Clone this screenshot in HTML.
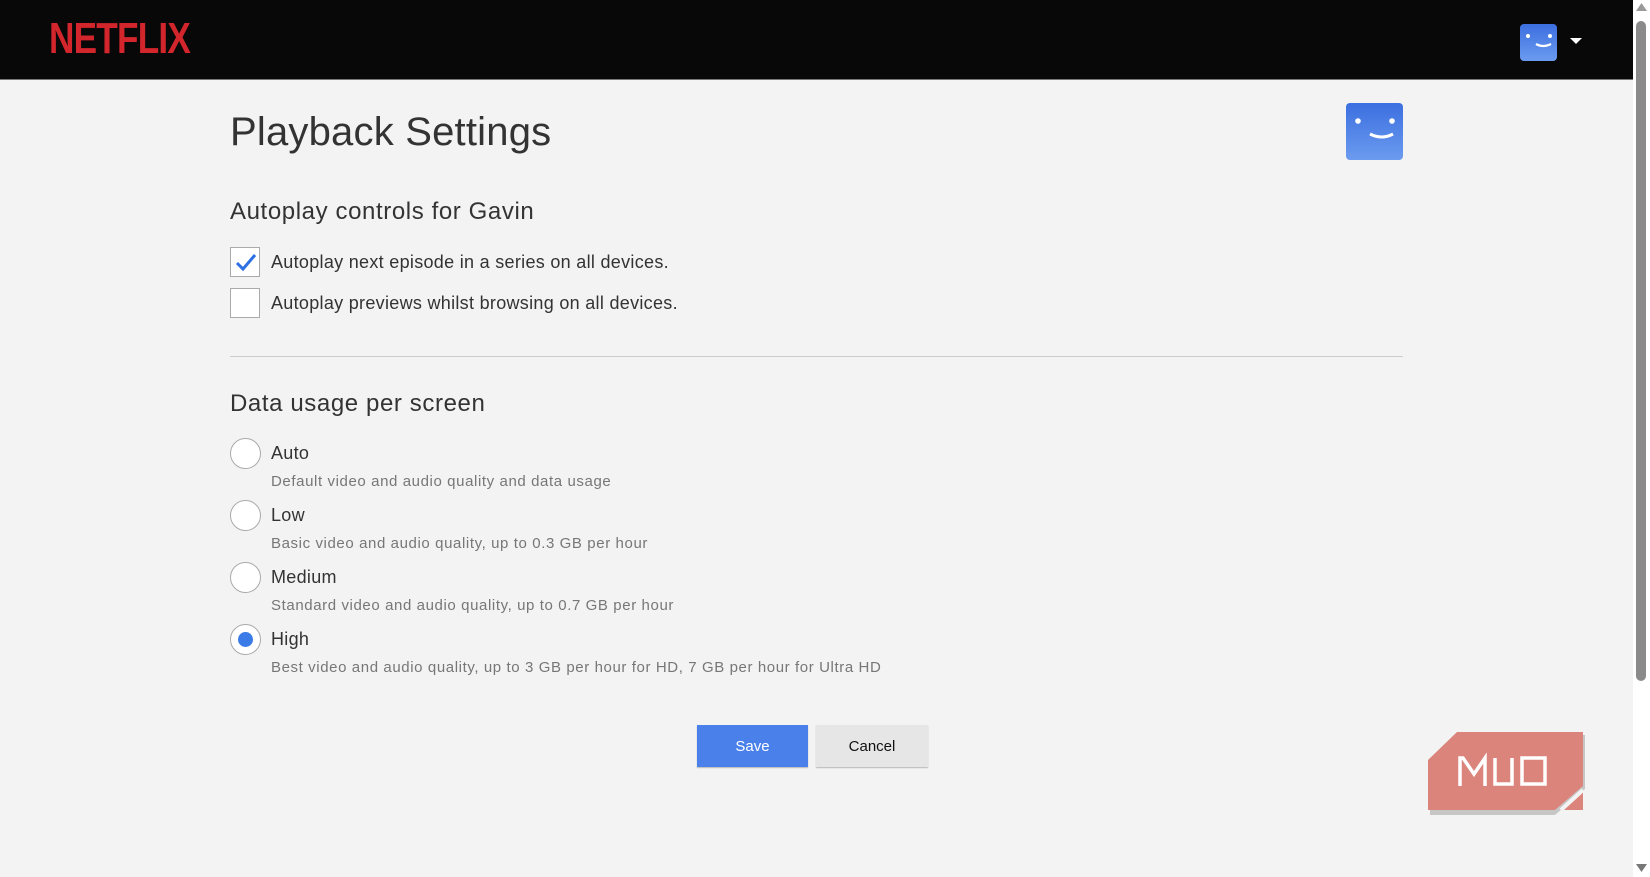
<!DOCTYPE html>
<html><head><meta charset="utf-8"><style>
*{margin:0;padding:0;box-sizing:border-box}
body{width:1650px;height:877px;background:#f3f3f3;font-family:"Liberation Sans",Arial,sans-serif;position:relative;overflow:hidden;color:#333}
.hdr{position:absolute;left:0;top:0;width:1633px;height:80px;background:#080808;border-bottom:1px solid #777}
.sb{position:absolute;right:0;top:0;width:17px;height:877px;background:#fff}
.thumb{position:absolute;left:3px;top:21px;width:10px;height:660px;background:#8a8a8a;border-radius:5px}
.a{position:absolute}
.av{background:linear-gradient(#3c6fe0,#6b9bef);border-radius:4px}
.t{position:absolute;white-space:nowrap}
.cb{position:absolute;width:30px;height:30px;border:1px solid #aaa;background:#fff}
.rd{position:absolute;width:31px;height:31px;border:1px solid #aaa;border-radius:50%;background:#fff}
.btn{position:absolute;height:42px;font-size:15px;display:flex;align-items:center;justify-content:center}
.m{font-size:18px;letter-spacing:0.3px}
.d{font-size:15px;color:#777;letter-spacing:0.6px}
</style></head><body>
<div class="hdr">
<div class="t" style="left:49px;top:14px;font-size:44px;font-weight:bold;color:#d3262c;letter-spacing:-1px;transform:scaleX(0.8);transform-origin:left">NETFLIX</div>
<div class="a av" style="left:1520px;top:24px;width:37px;height:37px">
<svg width="37" height="37"><circle cx="8" cy="12" r="2" fill="#fff"/><circle cx="30" cy="12" r="2" fill="#fff"/><path d="M16 20 Q23 24 31 20" stroke="#fff" stroke-width="2.2" fill="none"/></svg></div>
<svg class="a" style="left:1570px;top:38px" width="12" height="7"><path d="M0 0H12L6 6Z" fill="#fff"/></svg>
</div>
<div class="sb"><svg class="a" style="left:3px;top:3px" width="11" height="8"><path d="M0 8L5.5 0L11 8Z" fill="#999"/></svg><div class="thumb"></div><svg class="a" style="left:3px;top:864px" width="11" height="8"><path d="M0 0H11L5.5 8Z" fill="#777"/></svg></div>

<div class="t" style="left:230px;top:110px;font-size:40px;color:#333;letter-spacing:0.2px">Playback Settings</div>
<div class="a av" style="left:1346px;top:103px;width:57px;height:57px">
<svg width="57" height="57"><circle cx="12" cy="18" r="2.8" fill="#fff"/><circle cx="46" cy="18" r="2.8" fill="#fff"/><path d="M24 31 Q36 37 47 31" stroke="#fff" stroke-width="3" fill="none"/></svg></div>

<div class="t" style="left:230px;top:198px;font-size:24px;letter-spacing:0.6px">Autoplay controls for Gavin</div>
<div class="cb" style="left:230px;top:247px"><svg width="30" height="30"><path d="M6 15L12 21L24 7" stroke="#2f6fe4" stroke-width="3" fill="none"/></svg></div>
<div class="t m" style="left:271px;top:252px">Autoplay next episode in a series on all devices.</div>
<div class="cb" style="left:230px;top:288px"></div>
<div class="t m" style="left:271px;top:293px">Autoplay previews whilst browsing on all devices.</div>
<div class="a" style="left:230px;top:356px;width:1173px;height:1px;background:#ccc"></div>

<div class="t" style="left:230px;top:390px;font-size:24px;letter-spacing:0.6px">Data usage per screen</div>

<div class="rd" style="left:230px;top:438px"></div>
<div class="t m" style="left:271px;top:443px">Auto</div>
<div class="t d" style="left:271px;top:473px">Default video and audio quality and data usage</div>
<div class="rd" style="left:230px;top:500px"></div>
<div class="t m" style="left:271px;top:505px">Low</div>
<div class="t d" style="left:271px;top:535px">Basic video and audio quality, up to 0.3 GB per hour</div>
<div class="rd" style="left:230px;top:562px"></div>
<div class="t m" style="left:271px;top:567px">Medium</div>
<div class="t d" style="left:271px;top:597px">Standard video and audio quality, up to 0.7 GB per hour</div>
<div class="rd" style="left:230px;top:624px"><div class="a" style="left:7px;top:7px;width:15px;height:15px;border-radius:50%;background:#3b7be8"></div></div>
<div class="t m" style="left:271px;top:629px">High</div>
<div class="t d" style="left:271px;top:659px">Best video and audio quality, up to 3 GB per hour for HD, 7 GB per hour for Ultra HD</div>

<div class="btn" style="left:697px;top:725px;width:111px;background:#4a80ea;color:#fff;box-shadow:0 1px 1px rgba(0,0,0,.25)">Save</div>
<div class="btn" style="left:816px;top:725px;width:112px;background:#e6e6e6;color:#111;box-shadow:0 1px 1px rgba(0,0,0,.25)">Cancel</div>

<svg class="a" style="left:1425px;top:730px" width="166" height="86">
<path d="M32 2H158V56L128 82H3V30Z" fill="#999" opacity=".5" transform="translate(2,3)"/>
<path d="M32 2H158V56L130 80H3V30Z" fill="#da847c"/>
<path d="M136 80L158 60V80Z" fill="#da847c"/>
<path d="M136 80L158 60" stroke="#f3f3f3" stroke-width="4"/>
<g stroke="#fff" stroke-width="3.5" fill="none">
<path d="M35 56V28H38L49 44L60 28V56"/>
<path d="M70 28V54H87V28"/>
<path d="M97 28H120V54H97Z"/>
</g>
</svg>
</body></html>
